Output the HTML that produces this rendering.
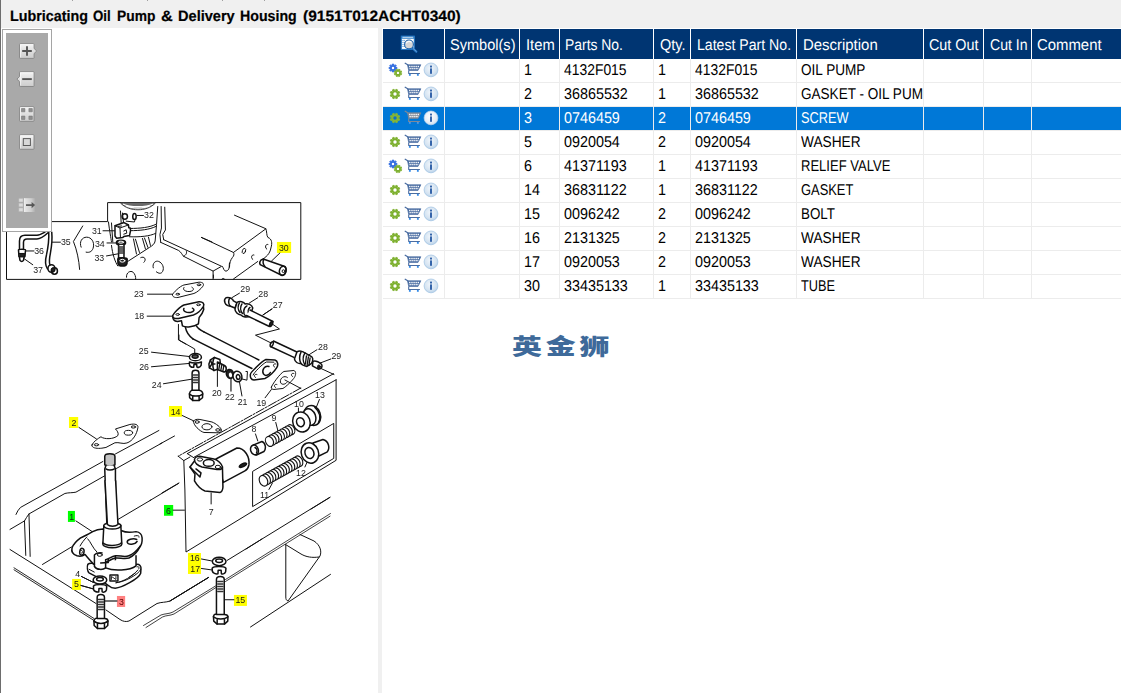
<!DOCTYPE html>
<html lang="en">
<head>
<meta charset="utf-8">
<title>Lubricating Oil Pump &amp; Delivery Housing</title>
<style>
html,body{margin:0;padding:0;}
body{width:1121px;height:693px;overflow:hidden;position:relative;background:#fff;font-family:"Liberation Sans","Noto Sans CJK SC",sans-serif;font-size:15.6px;color:#000;}
.abs,.t,.hdr,.hd,.hl,.vl,.sel,.clip,.ic{position:absolute;}
#topbar{position:absolute;left:0;top:0;width:1121px;height:28px;background:#f0f0f0;}
#title{position:absolute;left:0;top:0;}
.tt{font-weight:bold;font-size:15px;color:#000;-webkit-text-stroke:0.2px #000;}
.tk{position:absolute;top:0;width:1px;height:1px;background:#a0a0a0;}
#leftedge{position:absolute;left:0;top:0;width:1px;height:693px;background:#6d6d6d;}
#split{position:absolute;left:378px;top:28px;width:4px;height:665px;background:#f0f0f0;}
.t{text-rendering:geometricPrecision;white-space:nowrap;line-height:17px;height:17px;transform-origin:0 14px;display:block;}
.t.h{color:#fff;}
.hdr{left:383px;top:29px;width:738px;height:30px;background:#003572;}
.hd{top:29px;width:1px;height:30px;background:#fff;}
.hl{left:383px;width:738px;height:1px;background:#ececec;}
.vl{top:59px;width:1px;height:240px;background:#ececec;}
.sel{left:383px;width:738px;height:23px;background:#0078d7;}
.clip{left:797px;width:126px;height:23px;overflow:hidden;}
#wm{position:absolute;left:511.6px;top:330.8px;font-family:"Liberation Sans","Noto Sans CJK SC","WenQuanYi Zen Hei",sans-serif;font-weight:900;font-size:22px;line-height:32px;letter-spacing:2.85px;color:#3e6a9a;white-space:nowrap;transform-origin:0 0;transform:scaleX(1.36);}
#dia{position:absolute;left:0;top:0;}
</style>
</head>
<body>
<div id="topbar"></div>
<div class="tk" style="left:72px"></div><div class="tk" style="left:147px"></div><div class="tk" style="left:222px"></div><div class="tk" style="left:264px"></div>
<div id="title"><span class="t tt" style="left:9.80px;top:7.80px;transform:scaleX(0.9550)">Lubricating</span> <span class="t tt" style="left:92.60px;top:7.80px;transform:scaleX(0.8839)">Oil</span> <span class="t tt" style="left:116.80px;top:7.80px;transform:scaleX(0.9209)">Pump</span> <span class="t tt" style="left:160.70px;top:7.80px;transform:scaleX(1.0833)">&amp;</span> <span class="t tt" style="left:177.80px;top:7.80px;transform:scaleX(0.9717)">Delivery</span> <span class="t tt" style="left:239.70px;top:7.80px;transform:scaleX(0.9450)">Housing</span> <span class="t tt" style="left:302.50px;top:7.80px;transform:scaleX(1.0338)">(9151T012ACHT0340)</span></div>
<div id="split"></div>
<svg id="dia" width="378" height="693" viewBox="0 0 378 693" font-family="Liberation Sans, sans-serif" font-size="8.8" fill="none" stroke="#111" stroke-width="1" stroke-linecap="round" stroke-linejoin="round">
<style>
#dia path,#dia line,#dia ellipse,#dia circle,#dia rect,#dia polyline,#dia polygon{vector-effect:non-scaling-stroke}
#dia text{stroke:none;fill:#1a1a1a}
#dia{will-change:transform}
#dia .w{fill:#fff}
#dia .k{fill:#222}
#dia .th{stroke-width:1.5}
#dia .tn{stroke-width:0.8}
</style>
<!-- inset frame -->
<path d="M6.5 232V279.4H300.8V202.6H107.6V221.6H52"/>
<!-- tile A: [0,215] x10 -->
<g transform="translate(0,215) scale(0.0999)">
<path class="th" d="M450 172C420 190 395 202 370 203L250 203C215 203 195 225 195 260L195 345"/>
<path class="th" d="M480 178C440 215 400 240 370 240L270 240C245 240 235 250 235 275L235 345"/>
<path class="th" d="M185 350C185 340 255 340 255 350L250 415L240 425L235 455C225 470 210 470 200 455L195 425L190 415Z"/>
<path class="k" d="M192 385H248L245 420H195Z"/>
<path d="M255 360H340"/>
<path d="M245 440L328 498"/>
<path class="th" d="M488 172C492 250 480 330 465 400C452 450 450 500 475 540"/>
<path class="th" d="M518 172C525 250 520 300 505 380C495 430 488 470 500 500"/>
<ellipse class="th" cx="515" cy="535" rx="35" ry="38"/>
<ellipse class="th" cx="545" cy="560" rx="30" ry="32"/>
<ellipse class="k" cx="530" cy="550" rx="18" ry="20"/>
<path d="M525 272H605"/>
<path d="M828 110L735 265C770 350 790 450 797 545"/>
<path d="M812 322C790 270 820 222 868 222C915 222 945 270 935 320C928 360 900 382 862 372"/>
</g>
<text x="34.2" y="254.3">36</text>
<text x="33.2" y="272.6">37</text>
<text x="60.9" y="245.3">35</text>
<text x="91.9" y="234.1">31</text>
<text x="94.9" y="246.9">34</text>
<text x="94.4" y="260.9">33</text>
<!-- tile B: [100,198] x10 -->
<g transform="translate(100,198) scale(0.0999)">
<path fill="#6a6a6a" stroke="none" d="M205 48H555C520 85 460 112 380 112C300 112 240 85 205 48Z"/>
<path stroke="#fff" stroke-width="1.2" d="M235 62C300 95 460 95 525 62M260 80C320 108 440 108 500 80"/><path d="M205 50C250 100 320 118 380 118C440 118 510 100 555 50" stroke-width="0.8"/>
<path d="M578 85L566 265L552 430C548 460 520 480 495 495L270 640"/>
<path d="M300 305C400 305 500 295 562 262M300 327C400 327 500 317 560 284M295 388C400 392 500 382 555 355"/>
<path d="M335 410L365 560M355 412L395 545M425 405L455 510M445 400L480 495M485 392L505 475"/>
<path d="M612 85L615 300L600 365L608 445"/>
<path d="M648 92L655 320L628 365L638 418"/>
<path d="M1015 395L1121 440"/>
<circle class="th" cx="248" cy="185" r="27"/>
<ellipse class="th" cx="345" cy="185" rx="17" ry="31"/>
<path d="M370 175H435"/>
<path d="M262 232L345 240L350 218M205 130L212 250M225 150L235 240"/>
<path class="w th" d="M150 278L240 246L285 270L288 298L302 300L306 325L296 375L238 386L226 396L165 402L150 380Z"/>
<path d="M150 278L200 300L285 270M200 300L205 398M238 330L262 318L268 352L238 362M180 285L215 280"/>
<path d="M30 328H145"/>
<path d="M85 240C95 330 110 400 115 440M115 250L128 440M115 475C125 560 150 640 178 680"/>
<ellipse class="k th" cx="210" cy="448" rx="46" ry="24"/>
<ellipse stroke="#fff" cx="210" cy="442" rx="26" ry="10"/>
<path d="M70 450H165"/>
<path class="w th" d="M186 470V600H240V470"/>
<path d="M186 490H240M186 510H240M186 530H240M186 550H240" stroke-width="1.4" stroke="#333"/>
<path class="k th" d="M178 610C178 595 270 595 272 612L270 655C260 690 190 690 180 655Z"/>
<ellipse stroke="#fff" cx="224" cy="628" rx="25" ry="14"/>
<path d="M65 580L185 558"/>
</g>
<text x="144" y="218.4">32</text>
<g transform="translate(110,250) scale(0.0892)">
<path d="M345 85C385 65 415 105 380 138"/>
<path d="M485 200C470 150 510 115 545 128C590 145 610 200 590 240C575 270 545 265 520 245"/>
<path d="M185 305C180 250 230 225 260 250C280 270 290 300 288 325"/>
</g>
<path d="M163.9 239.8L221.6 266.3L213.1 271.1L183.6 256.3C182 254.5 181 252 178.7 250.5L160.8 242.4M186.3 250.9C187.2 252.800 186.3 255 183.6 256.3M213.1 271.1V279"/>
<!-- tile C: [200,198] x10 -->
<g transform="translate(200,198) scale(0.0999)">
<path d="M345 172L660 308L335 545L15 395"/>
<path d="M660 308C670 330 665 380 680 395C720 410 725 450 710 500C700 560 660 595 615 618"/>
<path d="M335 545C345 560 340 580 325 595C305 620 295 650 295 692"/>
<ellipse cx="440" cy="530" rx="16" ry="27" transform="rotate(20 440 530)"/>
<path d="M680 465C655 455 645 500 668 512M540 570C515 560 505 605 528 615"/>
<rect x="770" y="440" width="142" height="110" fill="#ffff00" stroke="none"/>
<path d="M800 550L715 632"/>
</g>
<text x="278.9" y="251.2">30</text>
<!-- tile D: [200,250] x10 -->
<g transform="translate(200,250) scale(0.0999)">
<path d="M578 115L335 290"/>

<path d="M295 130C290 170 300 200 260 212C240 212 235 180 225 165"/>
<path d="M215 296C220 280 245 280 250 296"/>
<path class="w th" d="M640 93L842 163C870 170 870 250 822 255L612 152C585 140 600 85 640 93Z"/>
<path class="th" d="M640 93C625 110 630 145 650 165"/>
<ellipse class="th" cx="828" cy="208" rx="33" ry="46" transform="rotate(15 828 208)"/>
<circle cx="836" cy="212" r="14"/>
<path d="M395 432L318 478M578 478L495 530M722 590L630 650"/>
<path class="w th" d="M260 478C300 470 330 490 335 510L370 530L350 580L300 560C250 560 230 500 260 478Z"/>
<path class="th" d="M300 480C280 500 285 540 300 560"/>
<path class="w th" d="M370 525C400 505 440 520 450 540C480 530 520 550 528 580L500 660C470 680 430 670 410 650C380 650 350 620 350 590Z"/>
<path class="th" d="M395 530C375 560 380 600 400 625M420 540C400 570 405 610 425 635M470 560C430 580 430 640 455 660M500 575C480 590 478 620 490 640"/>

</g>
<text x="240.3" y="292.1">29</text>
<text x="258.3" y="296.8">28</text>
<text x="272.8" y="308.0">27</text>
<path class="th" d="M192.9 338.9L251.9 368.5M203.9 331.9L258.9 360"/>
<path d="M321 368.5L334 374.5"/>
<!-- tile E: [120,275] x10 -->
<g transform="translate(120,275) scale(0.0999)">
<path d="M935 0V30"/>
<path class="w" d="M525 195C530 180 600 110 640 100L790 72C830 70 845 90 830 112C810 140 770 175 740 185L580 225C545 230 520 215 525 195Z"/>
<path d="M640 125C620 150 660 170 700 165C740 160 745 135 720 122"/>
<ellipse cx="790" cy="98" rx="18" ry="9"/><ellipse cx="578" cy="192" rx="18" ry="9"/>
<path d="M275 192H522M272 412H525"/>
<path class="w th" d="M528 410C525 440 540 462 575 465L615 458L625 510C660 530 740 520 785 490L792 425C810 405 830 375 838 345L835 315Z"/>
<path class="w th" d="M528 410C530 390 600 315 640 300L790 268C830 265 848 290 835 315C815 350 770 390 735 400L585 435C550 440 525 430 528 410Z"/>
<path class="th" d="M640 335C625 360 665 380 705 375C745 370 750 345 725 332"/>
<ellipse cx="785" cy="298" rx="18" ry="9"/><ellipse cx="578" cy="395" rx="18" ry="9"/>
<path class="th" d="M655 525C665 580 690 610 730 640M765 510C780 540 800 550 840 570"/>
<path d="M585 495V650L660 692"/>
</g>
<text x="133.9" y="297.4">23</text>
<text x="134.4" y="319.4">18</text>
<!-- tile F: [120,335] x10 -->
<g transform="translate(120,335) scale(0.0999)">
<path d="M590 0V50L748 140V200"/>

<ellipse class="w th" cx="755" cy="222" rx="60" ry="36" stroke-width="2.2"/>
<ellipse class="th" cx="752" cy="215" rx="30" ry="17" fill="#555" stroke-width="1.8"/>
<path class="w th" d="M695 270C720 285 790 285 815 270L812 305C800 325 780 325 770 320L768 295L740 295L738 322C720 325 700 315 695 300Z"/>
<path d="M315 172L690 215M315 318L690 285M435 488L720 442"/>
<path class="w th" d="M722 570V380C722 345 790 345 790 380V570"/>
<path d="M735 400H780M735 425H780M735 450H780M735 475H780" stroke-width="1.4" stroke="#333"/>
<path class="w th" d="M695 588C700 560 722 552 722 552H790C815 556 828 572 828 588L826 628L792 655H728L697 628Z"/>
<path class="th" d="M695 590C720 618 800 618 828 590M728 612V655M792 612V655"/>
<path class="w th" d="M905 250L945 225L1000 245L1005 290L985 340L940 355L895 330L890 290Z"/>
<path class="th" d="M945 225C925 260 925 310 940 355M905 250L920 290L895 330M920 290L950 290"/>
<path class="w th" d="M975 270L1045 305C1075 320 1065 370 1040 370L975 345Z"/>
<path d="M1000 285L990 340M1020 295L1010 350M1040 305L1030 360" stroke-width="1.3"/>
<path d="M975 345V515"/>
</g>
<text x="138.8" y="354.4">25</text>
<text x="139.2" y="370.4">26</text>
<text x="151.8" y="388">24</text>
<!-- tile G: [225,300] x10 -->
<g transform="translate(225,300) scale(0.0999)">
<path class="w th" d="M250 100L480 215L445 265L215 155Z" stroke="none"/>
<path class="th" d="M250 100L480 215M215 155L445 265"/>
<ellipse class="k th" cx="462" cy="240" rx="13" ry="27" transform="rotate(25 462 240)"/>
<path d="M470 88L380 150"/>
<path d="M480 245L545 290L305 352L460 430"/>
<path class="th" d="M485 410L720 520M455 465L690 575"/>
<ellipse class="th" cx="468" cy="442" rx="13" ry="26" transform="rotate(25 468 442)"/>
<path class="w th" d="M720 520C740 505 780 510 800 530L870 570C885 585 880 620 860 640L820 665C790 660 770 650 760 635C730 640 700 620 695 590Z"/>
<path class="th" d="M760 525C740 560 745 610 760 635M800 530C775 570 780 620 800 650"/>
<path d="M815 560L805 640M835 570L822 655M852 580L840 655" stroke-width="1.3"/>
<path class="w th" d="M880 615C900 600 960 625 970 650C975 675 960 692 935 692L875 660Z"/>
<ellipse class="k" cx="940" cy="668" rx="14" ry="18"/>
<path d="M920 498L830 555M1060 590L950 632"/>
</g>
<text x="318.0" y="349.9">28</text>
<text x="331.4" y="359.3">29</text>
<!-- tile H: [190,350] x10 -->
<g transform="translate(190,350) scale(0.0999)">

<path class="w th" d="M605 245C600 230 720 110 760 95L850 100C880 110 885 150 870 175C850 210 790 270 750 285L640 300C610 300 600 270 605 245Z"/>
<path d="M632 250C640 225 730 135 765 120L840 122"/>
<path class="th" d="M790 165C750 150 715 200 735 240C750 265 790 255 805 225"/>
<path d="M860 140C835 130 825 160 845 170M670 245C645 235 635 265 655 275"/>
<path class="w" d="M815 370C820 350 900 235 940 215L1040 205C1065 215 1060 250 1045 275C1030 300 960 370 930 385L840 395C820 395 812 385 815 370Z"/>
<path d="M975 275C945 250 900 280 905 320C910 350 950 350 970 325"/>
<path d="M1040 235C1015 225 1005 255 1025 265M870 345C845 335 835 365 855 375"/>
<path d="M815 395L752 478"/>
<path d="M950 300L1110 385"/>
<ellipse class="k th" cx="400" cy="240" rx="36" ry="46" transform="rotate(-15 400 240)"/>
<ellipse class="w" cx="405" cy="250" rx="16" ry="24" transform="rotate(-15 405 250)" stroke="none"/>
<ellipse class="w th" cx="475" cy="265" rx="44" ry="54" transform="rotate(-15 475 265)" stroke-width="2"/>
<ellipse class="th" cx="482" cy="270" rx="18" ry="24" transform="rotate(-15 482 270)"/>
<path d="M410 295V410" stroke="#555" stroke-width="1.6"/>
<path d="M495 320L520 460"/>
<path d="M520 290L570 302L575 215L560 215"/>
</g>
<text x="211.9" y="396.2">20</text>
<text x="224.9" y="400.0">22</text>
<text x="237.7" y="405.2">21</text>
<text x="256.4" y="406.0">19</text>
<!-- long lines of relief-valve box (absolute) -->
<path d="M300.8 388L178.2 456.2" stroke-dasharray="9 1.5 2 1.5"/>
<path d="M333.6 373.7L187.3 453.6M336.1 379.8L193.5 457.5"/>
<path d="M336.1 379.8V460.3L186 552L184.9 490L183.8 460.6"/>
<path d="M178.2 456.2L183.8 460.6L190 457M187.3 453.6L193.5 457.5"/>
<path d="M333.4 423.6L252.6 471.4V506.6L333.4 458.6Z"/>
<!-- tile I: [235,380] x10 -->
<g transform="translate(235,380) scale(0.0999)">
<path d="M845 195L815 270M635 280V320M408 425L430 510M205 540L228 610"/>
<ellipse class="w th" cx="775" cy="355" rx="80" ry="102" transform="rotate(-20 775 355)" stroke-width="2"/>
<ellipse class="w th" cx="745" cy="370" rx="62" ry="85" transform="rotate(-20 745 370)"/>
<path class="th" d="M800 275C850 320 860 380 835 430"/>
<ellipse class="w th" cx="665" cy="420" rx="86" ry="102" transform="rotate(-20 665 420)" stroke-width="2.4"/>
<ellipse class="th" cx="655" cy="422" rx="38" ry="46" transform="rotate(-20 655 422)" stroke-width="1.8"/>
<g class="w" stroke-width="1.15">
<ellipse cx="558" cy="497" rx="38" ry="52" transform="rotate(-25 558 497)"/>
<ellipse cx="534" cy="510" rx="38" ry="52" transform="rotate(-25 534 510)"/>
<ellipse cx="507" cy="525" rx="38" ry="52" transform="rotate(-25 507 525)"/>
<ellipse cx="480" cy="540" rx="38" ry="52" transform="rotate(-25 480 540)"/>
<ellipse cx="453" cy="555" rx="38" ry="52" transform="rotate(-25 453 555)"/>
<ellipse cx="426" cy="570" rx="38" ry="52" transform="rotate(-25 426 570)"/>
<ellipse cx="399" cy="585" rx="38" ry="52" transform="rotate(-25 399 585)"/>
<ellipse cx="372" cy="600" rx="38" ry="52" transform="rotate(-25 372 600)"/>
<ellipse cx="345" cy="615" rx="38" ry="52" transform="rotate(-25 345 615)"/>
</g>
</g>
<text x="315.0" y="397.9">13</text>
<text x="294.0" y="407.1">10</text>
<text x="271.6" y="420.7">9</text>
<text x="251.4" y="431.7">8</text>
<!-- tile J: [235,440] x10 -->
<g transform="translate(235,440) scale(0.0999)">
<path d="M950 575L760 692"/>
<path class="w th" d="M780 30L880 -5C940 10 955 85 920 122L830 165Z"/>
<ellipse class="w th" cx="750" cy="130" rx="86" ry="104" transform="rotate(-20 750 130)" stroke-width="2"/>
<ellipse class="th" cx="745" cy="130" rx="44" ry="56" transform="rotate(-20 745 130)"/>
<path d="M700 270L720 225M340 495L375 430"/>
<g class="w" stroke-width="1.15">
<ellipse cx="636" cy="213" rx="40" ry="56" transform="rotate(-25 636 213)"/>
<ellipse cx="609" cy="228" rx="40" ry="56" transform="rotate(-25 609 228)"/>
<ellipse cx="582" cy="243" rx="40" ry="56" transform="rotate(-25 582 243)"/>
<ellipse cx="555" cy="258" rx="40" ry="56" transform="rotate(-25 555 258)"/>
<ellipse cx="528" cy="273" rx="40" ry="56" transform="rotate(-25 528 273)"/>
<ellipse cx="501" cy="288" rx="40" ry="56" transform="rotate(-25 501 288)"/>
<ellipse cx="474" cy="303" rx="40" ry="56" transform="rotate(-25 474 303)"/>
<ellipse cx="447" cy="318" rx="40" ry="56" transform="rotate(-25 447 318)"/>
<ellipse cx="420" cy="333" rx="40" ry="56" transform="rotate(-25 420 333)"/>
<ellipse cx="393" cy="348" rx="40" ry="56" transform="rotate(-25 393 348)"/>
<ellipse cx="366" cy="363" rx="40" ry="56" transform="rotate(-25 366 363)"/>
<ellipse cx="339" cy="378" rx="40" ry="56" transform="rotate(-25 339 378)"/>
<ellipse cx="312" cy="393" rx="40" ry="56" transform="rotate(-25 312 393)"/>
<ellipse cx="285" cy="408" rx="40" ry="56" transform="rotate(-25 285 408)"/>
</g>
<path class="w th" d="M185 50L270 15C310 30 312 90 290 115L215 150Z"/>
<ellipse class="w th" cx="195" cy="100" rx="38" ry="50" transform="rotate(-20 195 100)" stroke-width="2"/>
<path class="th" d="M200 75C220 85 225 110 215 130"/>
</g>
<text x="296.0" y="476.4">12</text>
<text x="260.0" y="497.7">11</text>
<!-- tile K: [160,425] x10 -->
<g transform="translate(160,425) scale(0.0999)">
<path d="M0 190L145 110M20 680L190 580"/>
<path class="w th" d="M560 340L770 230C850 230 900 320 890 400C885 430 870 450 850 460L635 575Z"/>
<path class="k" d="M795 420C790 400 850 370 865 385C872 400 812 435 795 420Z" stroke-width="1.6"/>
<path class="w th" d="M345 360L300 420L350 490L345 560C380 620 420 650 450 660L600 675C620 670 628 650 630 620L625 420Z"/>
<path class="w th" d="M345 345C350 320 380 310 410 315L540 340C580 350 620 390 625 420C620 440 600 450 570 445L420 420C380 410 345 380 345 345Z"/>
<ellipse cx="400" cy="345" rx="27" ry="17"/>
<ellipse class="th" cx="488" cy="380" rx="54" ry="34"/>
<ellipse cx="580" cy="420" rx="27" ry="17"/>
<path class="th" d="M300 420L400 520L410 480L360 440"/>
</g>
<!-- tile L: [150,480] x10 -->
<g transform="translate(150,480) scale(0.0999)">
<rect x="140" y="250" width="92" height="108" fill="#00ff00" stroke="none"/>
<path d="M232 302H345M612 130V240M0 205L285 35M960 692L1121 590"/>
</g>
<text x="165.9" y="513.7">6</text>
<text x="208.7" y="514.9">7</text>
<!-- tile M: [160,395] x10 -->
<g transform="translate(160,395) scale(0.0999)">
<rect x="90" y="110" width="130" height="108" fill="#ffff00" stroke="none"/>
<path d="M222 205L335 258"/>
<path class="w" d="M335 262C345 245 370 240 400 245L520 270C560 285 610 325 615 350C615 370 600 380 570 378L440 375C400 365 330 300 335 262Z"/>
<ellipse cx="372" cy="270" rx="20" ry="13"/>
<ellipse cx="470" cy="318" rx="50" ry="31"/>
<ellipse cx="580" cy="350" rx="22" ry="13"/>
</g>
<text x="170.7" y="414.9">14</text>
<!-- sump long lines (absolute) -->
<path d="M330 497.2L227 560.5"/>
<path d="M208.5 577.5L170 601C166 602.5 161 602 157 603.5L129 621C126 622 123 621.5 120 619.5L106 610"/>
<path d="M330.5 513.5L225.5 579.5M330 516.2L225.5 581.5M215.5 586L173 612C169 614 165 613.5 161 615L143.5 625.5M216 587.5L174 614C170 615.8 166 615.2 162.500 617L146 627.500" stroke-width="0.8"/>
<path d="M10 549.5L96 603.500"/>
<path d="M14 567.8L94 618.5M14 569.8L94 620.5" stroke-width="0.9"/>
<path d="M330.5 574.4L250.5 627"/>
<path d="M285.8 545V597C285.8 599.500 286.500 600.5 288 601L320 556C322 551 320 545 314 541L300 534.5M285.5 544.5L301 554C306 557 312 558 319 557"/>
<path d="M208.500 577.500L170 601"/>
<!-- tile N: [50,405] x10 -->
<g transform="translate(50,405) scale(0.0999)">
<rect x="190" y="120" width="92" height="110" fill="#ffff00" stroke="none"/>
<path d="M290 225L465 340"/>
<path d="M1090 255L655 490M1121 380L665 635"/>
<path class="w" d="M420 400C430 370 480 335 510 318C540 345 640 345 680 305C690 280 670 255 655 240L800 195C850 185 885 195 880 225C870 290 830 360 770 380C730 395 690 370 650 378L560 425C500 440 410 440 420 400Z"/>
<ellipse cx="465" cy="398" rx="22" ry="11"/><ellipse cx="785" cy="278" rx="42" ry="24"/><ellipse cx="835" cy="220" rx="22" ry="11"/>
<path class="th" fill="#c4c4c4" d="M548 600V515C548 480 650 480 650 515V600C620 615 580 615 548 600Z"/>
<path class="w th" d="M560 605L548 640L585 1600H655L655 640L642 605"/>
<path class="th" d="M560 640C580 655 620 655 645 640"/>
</g>
<text x="71.6" y="425.8">2</text>
<!-- tile O: [0,460] x10 -->
<g transform="translate(0,460) scale(0.0999)">
<path d="M1030 15L205 475C185 495 170 520 160 545"/>
<path d="M1045 160L760 322C720 330 690 325 650 335L290 540C270 560 260 590 245 610L100 695"/>
<path d="M245 610L258 955M290 540L302 965"/>
<rect x="680" y="510" width="70" height="110" fill="#00ff00" stroke="none"/>
<path d="M760 610L925 718"/>
</g>
<text x="69.2" y="519.8">1</text>
<!-- tile P: [0,520] x10 -->
<g transform="translate(0,520) scale(0.0999)">
<path d="M715 270L425 445"/>
<rect x="722" y="590" width="88" height="110" fill="#ffff00" stroke="none"/>
<path d="M815 565L935 625M810 655L935 690"/>
</g>
<text x="75.2" y="576.5">4</text>
<text x="74" y="587.0">5</text>
<!-- pump body: lower part, tile W [70,545] x12.38 -->
<g transform="translate(70,545) scale(0.08078)">
<path class="w th" d="M220 240C240 222 290 222 305 240L820 240C860 235 885 260 878 300L875 350C850 420 640 530 560 535C520 535 495 520 480 505L330 395L235 345C215 320 210 270 220 240Z"/>
<path d="M235 300L300 335M878 300C850 370 650 470 570 465M730 400L810 345M830 270C850 262 865 280 850 295"/>
</g>
<!-- pump body: upper part, [60,520] x11.18 -->
<g transform="translate(60,520) scale(0.089445)">
<path d="M1017 -224L648 -6"/>
<path class="w" stroke="none" d="M510 470L510 535C600 575 780 565 850 512L850 410Z"/><path class="th" d="M510 535C600 575 780 565 850 512L850 400"/>
<path class="w th" d="M365 130C320 160 260 185 230 200C190 230 150 270 135 310C125 350 140 385 190 400C230 410 260 400 280 385C310 420 345 465 385 500L385 520C410 560 480 560 510 535L510 445C550 430 580 405 620 400C670 395 720 420 770 400C820 380 860 340 890 300C915 280 920 240 918 200C915 160 890 135 850 130C790 140 730 140 690 120L480 100C440 100 400 110 365 130Z"/>
<path class="th" d="M520 470C550 455 580 435 620 425C670 420 720 440 770 425C830 400 870 350 900 290"/>
<path class="th" d="M385 500L385 390C400 372 430 364 470 368M455 480L540 475"/>
<ellipse cx="445" cy="390" rx="28" ry="16"/>
<path d="M310 210C340 240 370 320 410 355M300 190C270 220 240 260 225 290"/>
<ellipse class="th" cx="245" cy="355" rx="24" ry="38" transform="rotate(10 245 355)"/>
<path d="M235 340C260 338 262 368 240 370"/>
<path class="th" d="M858 218C815 200 745 220 752 250C760 280 840 278 862 240"/>
<path d="M830 180C855 168 895 175 885 192"/>
<ellipse class="w th" cx="585" cy="265" rx="108" ry="46" stroke-width="2"/>
<path class="w th" d="M490 65L480 255C515 295 655 295 690 250L680 60Z"/>
<ellipse class="w th" cx="585" cy="65" rx="96" ry="36"/>
<path class="w th" d="M503 -440L530 50C555 75 620 75 648 50L622 -440" stroke-width="1.8"/>
</g>
<!-- tile R: [60,560] x10 -->
<g transform="translate(60,560) scale(0.0999)">
<path class="w" d="M500 150H580V210H500Z" stroke-width="1.4"/>
<path d="M515 195V165L560 195V165" stroke-width="0.9"/>
<path d="M560 230C640 210 720 170 780 100"/>
<ellipse class="w th" cx="400" cy="200" rx="68" ry="40" stroke-width="2.4"/>
<ellipse class="th" cx="400" cy="192" rx="34" ry="17" stroke-width="1.8"/>
<path class="w th" d="M335 262C350 240 450 240 468 262L465 300C455 325 430 325 422 318L420 285L390 285L388 320C365 325 340 312 336 295Z" stroke-width="2"/>
<path d="M215 165L335 225M210 255L335 290"/>
<rect x="570" y="360" width="82" height="110" fill="#ff8080" stroke="none"/>
<path d="M450 410H570" stroke="#444" stroke-width="1.4"/>
<path class="w th" d="M372 600V375C372 335 445 335 445 375V600"/>
<path d="M385 395H435M385 420H435M385 445H435M385 470H435M385 495H435" stroke-width="1.4" stroke="#333"/>
<path class="w th" d="M340 610C345 580 372 580 372 585H445C470 585 480 600 480 612L478 655L445 685H375L342 655Z"/>
<path class="th" d="M340 612C370 642 450 642 480 612M375 636V685M445 636V685"/>
</g>
<text x="119.1" y="604.8" style="fill:#5a0000">3</text>
<!-- tile S: [170,540] x10 -->
<g transform="translate(170,540) scale(0.0999)">
<rect x="180" y="130" width="130" height="210" fill="#ffff00" stroke="none"/>
<path d="M315 190L420 210M315 285L420 300"/>
<path d="M385 375L0 610"/>
<ellipse class="w th" cx="492" cy="215" rx="68" ry="42" stroke-width="2.4"/>
<ellipse class="th" cx="492" cy="208" rx="34" ry="17" stroke-width="1.8"/>
<path class="w th" d="M422 282C440 260 540 260 560 282L557 318C547 343 522 343 514 336L512 303L482 303L480 338C457 343 428 330 424 313Z" stroke-width="2"/>
<rect x="640" y="550" width="130" height="110" fill="#ffff00" stroke="none"/>
<path d="M545 598H640"/>
<path class="w th" d="M465 760V395C465 355 543 355 543 395V760"/>
<path d="M478 415H530M478 440H530M478 465H530M478 490H530M478 515H530" stroke-width="1.4" stroke="#333"/>
<path class="w th" d="M435 765C440 740 465 740 465 745H543C570 745 580 760 580 770L578 812L545 842H472L438 812Z"/>
<path class="th" d="M435 768C465 797 550 797 580 768M472 792V842M545 792V842"/>
</g>
<text x="189.9" y="561.2">16</text>
<text x="190.3" y="571.6">17</text>
<text x="235.4" y="603.4">15</text>
</svg>

<div class="abs" style="left:2px;top:29px;width:48px;height:201px;border:1px solid #a5a5a5;background:#fff;"></div>
<div class="abs" style="left:6px;top:33px;width:42px;height:195px;background:#a9a9a9;"></div>
<svg class="abs" style="left:6px;top:33px" width="42" height="195" viewBox="6 33 42 195">
<defs>
<linearGradient id="bg1" x1="0" y1="0" x2="0" y2="1"><stop offset="0" stop-color="#f4f4f4"/><stop offset="0.5" stop-color="#dedede"/><stop offset="1" stop-color="#cdcdcd"/></linearGradient>
<linearGradient id="bg2" x1="0" y1="0" x2="1" y2="0"><stop offset="0" stop-color="#e8e8e8"/><stop offset="0.6" stop-color="#cfcfcf"/><stop offset="1" stop-color="#a9a9a9"/></linearGradient>
</defs>
<!-- zoom in -->
<path d="M20.200 43.600h13.200q0.700 0 0.700 0.700v4.200l2.600 2.500l-2.600 2.500v4.200q0 0.700-0.700 0.700h-13.200q-0.700 0-0.700-0.700v-13.400q0-0.700 0.700-0.700z" fill="url(#bg1)" stroke="#858585" stroke-width="0.9"/>
<path d="M20.600 57.300v-12.600h12.400" fill="none" stroke="#fff" stroke-width="0.7" opacity="0.9"/>
<path d="M22.200 51h9.600M27 46.200v9.600" stroke="#555" stroke-width="1.900" fill="none"/>
<!-- zoom out -->
<path d="M20.200 71.700h13.200q0.700 0 0.700 0.700v13.400q0 0.700-0.700 0.700h-13.200q-0.700 0-0.700-0.700v-4.200l-2.600-2.500l2.600-2.500v-4.200q0-0.700 0.700-0.700z" fill="url(#bg1)" stroke="#858585" stroke-width="0.9"/>
<path d="M20.600 85.400v-12.600h12.400" fill="none" stroke="#fff" stroke-width="0.7" opacity="0.9"/>
<path d="M22.200 79.100h9.600" stroke="#555" stroke-width="1.900" fill="none"/>
<!-- grid -->
<rect x="19.600" y="106.700" width="14.400" height="14.600" rx="0.700" fill="url(#bg1)" stroke="#858585" stroke-width="0.9"/>
<path d="M20.600 120.400v-12.600h12.400" fill="none" stroke="#fff" stroke-width="0.7" opacity="0.9"/>
<path d="M21.500 108.500h3.400v3.300h-3.400zM28.900 108.500h3.400v3.300h-3.400zM21.500 116.100h3.400v3.300h-3.400zM28.900 116.100h3.400v3.300h-3.400z" fill="#909090" stroke="#777" stroke-width="0.6"/>
<!-- fit -->
<rect x="19.600" y="134.700" width="14.400" height="14.600" rx="0.700" fill="url(#bg1)" stroke="#858585" stroke-width="0.9"/>
<path d="M20.600 148.400v-12.600h12.400" fill="none" stroke="#fff" stroke-width="0.7" opacity="0.9"/>
<rect x="23.300" y="138.600" width="7.100" height="6.900" fill="#d8d8d8" stroke="#5a5a5a" stroke-width="1"/>
<!-- list arrow -->
<rect x="24.200" y="198.200" width="11.400" height="13.800" fill="url(#bg2)"/>
<path d="M24.400 198.200v13.800" stroke="#f4f4f4" stroke-width="0.8"/>
<path d="M18.900 198.400h4.100v3.500h-4.100zM18.900 203.200h4.100v3.500h-4.100zM18.900 208h4.100v3.500h-4.100z" fill="#dcdcdc" stroke="#b8b8b8" stroke-width="0.5"/>
<path d="M26 205.100h6.400" stroke="#555" stroke-width="1.700" fill="none"/>
<path d="M31.600 201.900l3.500 3.200l-3.500 3.200z" fill="#555"/>
</svg>

<div id="leftedge"></div>
<svg width="0" height="0" style="position:absolute">
<defs>
<radialGradient id="ig" cx="0.45" cy="0.4" r="0.7"><stop offset="0" stop-color="#f1f6fb"/><stop offset="0.6" stop-color="#d4e3f1"/><stop offset="1" stop-color="#a9c8e4"/></radialGradient>
<radialGradient id="igs" cx="0.45" cy="0.4" r="0.7"><stop offset="0" stop-color="#ffffff"/><stop offset="0.6" stop-color="#e6eef7"/><stop offset="1" stop-color="#c3d8ec"/></radialGradient>
<g id="gear1"><path d="M16.81 11.96L16.07 13.72L14.86 13.18L14.18 13.86L14.72 15.07L12.96 15.81L12.48 14.57L11.52 14.57L11.04 15.81L9.28 15.07L9.82 13.86L9.14 13.18L7.93 13.72L7.19 11.96L8.43 11.48L8.43 10.52L7.19 10.04L7.93 8.28L9.14 8.82L9.82 8.14L9.28 6.93L11.04 6.19L11.52 7.43L12.48 7.43L12.96 6.19L14.72 6.93L14.18 8.14L14.86 8.82L16.07 8.28L16.81 10.04L15.57 10.52L15.57 11.48Z" fill="#7db02e" stroke="#7db02e" stroke-width="0.8" stroke-linejoin="round"/><circle cx="12" cy="11" r="1.7" fill="#fff"/></g>
<g id="gear1s"><path d="M16.81 11.96L16.07 13.72L14.86 13.18L14.18 13.86L14.72 15.07L12.96 15.81L12.48 14.57L11.52 14.57L11.04 15.81L9.28 15.07L9.82 13.86L9.14 13.18L7.93 13.72L7.19 11.96L8.43 11.48L8.43 10.52L7.19 10.04L7.93 8.28L9.14 8.82L9.82 8.14L9.28 6.93L11.04 6.19L11.52 7.43L12.48 7.43L12.96 6.19L14.72 6.93L14.18 8.14L14.86 8.82L16.07 8.28L16.81 10.04L15.57 10.52L15.57 11.48Z" fill="#86b535" stroke="#86b535" stroke-width="0.8" stroke-linejoin="round"/><circle cx="12" cy="11" r="1.7" fill="#0a6fd0"/></g>
<g id="gear2"><path d="M9.22 5.08L10.78 5.08L10.74 6.20L11.46 6.49L12.22 5.67L13.33 6.78L12.51 7.54L12.80 8.26L13.92 8.22L13.92 9.78L12.80 9.74L12.51 10.46L13.33 11.22L12.22 12.33L11.46 11.51L10.74 11.80L10.78 12.92L9.22 12.92L9.26 11.80L8.54 11.51L7.78 12.33L6.67 11.22L7.49 10.46L7.20 9.74L6.08 9.78L6.08 8.22L7.20 8.26L7.49 7.54L6.67 6.78L7.78 5.67L8.54 6.49L9.26 6.20Z" fill="#2f6be0" stroke="#2f6be0" stroke-width="0.8" stroke-linejoin="round"/><circle cx="10" cy="9" r="1.25" fill="#fff"/><path d="M18.73 14.64L18.16 16.01L17.23 15.60L16.70 16.13L17.11 17.06L15.74 17.63L15.37 16.68L14.63 16.68L14.26 17.63L12.89 17.06L13.30 16.13L12.77 15.60L11.84 16.01L11.27 14.64L12.22 14.27L12.22 13.53L11.27 13.16L11.84 11.79L12.77 12.20L13.30 11.67L12.89 10.74L14.26 10.17L14.63 11.12L15.37 11.12L15.74 10.17L17.11 10.74L16.70 11.67L17.23 12.20L18.16 11.79L18.73 13.16L17.78 13.53L17.78 14.27Z" fill="#7db02e" stroke="#7db02e" stroke-width="0.8" stroke-linejoin="round"/><circle cx="15" cy="13.9" r="1.2" fill="#fff"/></g>
<g id="cart"><path d="M22.200 4.300L24.700 5.700" fill="none" stroke="#4a6da2" stroke-width="1.300" stroke-linecap="round"/>
<path d="M24.500 5.800H37.900L35 11.400H25.700Z" fill="#4a6da2" stroke="#4a6da2" stroke-width="0.700" stroke-linejoin="round"/>
<rect x="26.10" y="6.800" width="1.350" height="1.400" fill="#fff"/><rect x="28.30" y="6.800" width="1.350" height="1.400" fill="#fff"/><rect x="30.40" y="6.800" width="1.350" height="1.400" fill="#fff"/><rect x="32.50" y="6.800" width="1.350" height="1.400" fill="#fff"/><rect x="34.60" y="6.800" width="1.350" height="1.400" fill="#fff"/><rect x="26.50" y="8.900" width="1.300" height="1.400" fill="#fff"/><rect x="28.50" y="8.900" width="1.300" height="1.400" fill="#fff"/><rect x="30.50" y="8.900" width="1.300" height="1.400" fill="#fff"/><rect x="32.50" y="8.900" width="1.300" height="1.400" fill="#fff"/><rect x="34.350" y="8.900" width="0.900" height="1.400" fill="#fff"/>
<path d="M25.700 11.400V14.500H36.900" fill="none" stroke="#4a6da2" stroke-width="1.100" stroke-linejoin="round"/>
<rect x="25.900" y="15.100" width="1.900" height="1.700" rx="0.500" fill="#2b86e6"/><rect x="33.900" y="15.100" width="1.900" height="1.700" rx="0.500" fill="#2b86e6"/></g>
<g id="carts"><path d="M22.200 4.300L24.700 5.700" fill="none" stroke="#7f8896" stroke-width="1.300" stroke-linecap="round"/>
<path d="M24.500 5.800H37.900L35 11.400H25.700Z" fill="#7f8896" stroke="#7f8896" stroke-width="0.700" stroke-linejoin="round"/>
<rect x="26.10" y="6.800" width="1.350" height="1.400" fill="#fff"/><rect x="28.30" y="6.800" width="1.350" height="1.400" fill="#fff"/><rect x="30.40" y="6.800" width="1.350" height="1.400" fill="#fff"/><rect x="32.50" y="6.800" width="1.350" height="1.400" fill="#fff"/><rect x="34.60" y="6.800" width="1.350" height="1.400" fill="#fff"/><rect x="26.50" y="8.900" width="1.300" height="1.400" fill="#fff"/><rect x="28.50" y="8.900" width="1.300" height="1.400" fill="#fff"/><rect x="30.50" y="8.900" width="1.300" height="1.400" fill="#fff"/><rect x="32.50" y="8.900" width="1.300" height="1.400" fill="#fff"/><rect x="34.350" y="8.900" width="0.900" height="1.400" fill="#fff"/>
<path d="M25.700 11.400V14.500H36.900" fill="none" stroke="#7f8896" stroke-width="1.100" stroke-linejoin="round"/>
<rect x="25.900" y="15.100" width="1.900" height="1.700" rx="0.500" fill="#5a9ae0"/><rect x="33.900" y="15.100" width="1.900" height="1.700" rx="0.500" fill="#5a9ae0"/></g>
<g id="info"><circle cx="48" cy="10.900" r="6.900" fill="url(#ig)" stroke="#9fc2e2" stroke-width="0.700"/>
<rect x="47.050" y="6.600" width="1.900" height="1.900" fill="#2d5ea6"/>
<rect x="47.050" y="9.400" width="1.900" height="5.400" fill="#2d5ea6"/></g>
<g id="infos"><circle cx="48" cy="10.900" r="6.900" fill="url(#igs)" stroke="#c5d9ee" stroke-width="0.700"/>
<rect x="47.050" y="6.600" width="1.900" height="1.900" fill="#2d5ea6"/>
<rect x="47.050" y="9.400" width="1.900" height="5.400" fill="#2d5ea6"/></g>
<g id="hicon">
<rect x="18.300" y="7.100" width="13" height="13.300" fill="#fff" stroke="#1f74c4" stroke-width="1"/>
<rect x="18.300" y="7.100" width="13" height="2.600" fill="#1f74c4"/>
<path d="M19.400 8.300H30.300" stroke="#fff" stroke-width="0.800"/>
<path d="M19.400 11.400H22M19.400 13.400H22M19.400 15.400H22M19.400 17.400H22" stroke="#1f74c4" stroke-width="0.800" stroke-dasharray="1.200 0.600"/>
<path d="M29 18.700L33.300 22.700" stroke="#1f6fbf" stroke-width="2.300" stroke-linecap="round"/>
<path d="M30.100 19.500L33.300 22.500" stroke="#9cc4ea" stroke-width="0.700" stroke-linecap="round"/>
<circle cx="26" cy="15.400" r="4.400" fill="#d6d6d6" stroke="#1c63ad" stroke-width="1.100"/>
<path d="M23.200 14.300A3.100 3.100 0 0 1 28.500 13.500" stroke="#fff" stroke-width="1.100" fill="none" opacity="0.950"/>
</g>
</defs>
</svg>

<div class="hdr"></div>
<svg class="ic" style="left:383px;top:29px" width="61" height="30" viewBox="0 0 61 30"><use href="#hicon"/></svg>
<div class="hd" style="left:444px"></div>
<div class="hd" style="left:519px"></div>
<div class="hd" style="left:559px"></div>
<div class="hd" style="left:653px"></div>
<div class="hd" style="left:690px"></div>
<div class="hd" style="left:796px"></div>
<div class="hd" style="left:923px"></div>
<div class="hd" style="left:983px"></div>
<div class="hd" style="left:1031px"></div>
<span class="t h" style="left:450.40px;top:36.70px;transform:scale(0.9330,1);">Symbol(s)</span>
<span class="t h" style="left:525.70px;top:36.70px;transform:scale(0.9459,1);">Item</span>
<span class="t h" style="left:565.30px;top:36.70px;transform:scale(0.8916,1);">Parts No.</span>
<span class="t h" style="left:659.60px;top:36.70px;transform:scale(0.9288,1);">Qty.</span>
<span class="t h" style="left:696.90px;top:36.70px;transform:scale(0.9044,1);">Latest Part No.</span>
<span class="t h" style="left:802.90px;top:36.70px;transform:scale(0.9577,1);">Description</span>
<span class="t h" style="left:929.30px;top:36.70px;transform:scale(0.9211,1);">Cut Out</span>
<span class="t h" style="left:989.60px;top:36.70px;transform:scale(0.9027,1);">Cut In</span>
<span class="t h" style="left:1037.40px;top:36.70px;transform:scale(0.9553,1);">Comment</span>
<div class="hl" style="top:82px"></div>
<span class="t" style="left:523.90px;top:61.70px;transform:scale(0.9200,1);">1</span>
<span class="t" style="left:563.80px;top:61.70px;transform:scale(0.8907,1);">4132F015</span>
<span class="t" style="left:657.90px;top:61.70px;transform:scale(0.9200,1);">1</span>
<span class="t" style="left:694.80px;top:61.70px;transform:scale(0.8907,1);">4132F015</span>
<div class="clip" style="top:59px"><span class="t" style="left:4.40px;top:2.70px;transform:scale(0.8709,1);">OIL PUMP</span></div>
<svg class="ic" style="left:383px;top:59px" width="61" height="23" viewBox="0 0 61 23"><use href="#gear2"/><use href="#cart"/><use href="#info"/></svg>
<div class="hl" style="top:106px"></div>
<span class="t" style="left:523.90px;top:85.70px;transform:scale(0.9200,1);">2</span>
<span class="t" style="left:563.80px;top:85.70px;transform:scale(0.9200,1);">36865532</span>
<span class="t" style="left:657.90px;top:85.70px;transform:scale(0.9200,1);">1</span>
<span class="t" style="left:694.80px;top:85.70px;transform:scale(0.9200,1);">36865532</span>
<div class="clip" style="top:83px"><span class="t" style="left:4.40px;top:2.70px;transform:scale(0.8689,1);">GASKET - OIL PUM</span></div>
<svg class="ic" style="left:383px;top:83px" width="61" height="23" viewBox="0 0 61 23"><use href="#gear1"/><use href="#cart"/><use href="#info"/></svg>
<div class="sel" style="top:107px"></div>
<div class="hl" style="top:130px"></div>
<span class="t" style="left:523.90px;top:109.70px;transform:scale(0.9200,1);color:#fff;">3</span>
<span class="t" style="left:563.80px;top:109.70px;transform:scale(0.9200,1);color:#fff;">0746459</span>
<span class="t" style="left:657.90px;top:109.70px;transform:scale(0.9200,1);color:#fff;">2</span>
<span class="t" style="left:694.80px;top:109.70px;transform:scale(0.9200,1);color:#fff;">0746459</span>
<div class="clip" style="top:107px"><span class="t" style="left:4.40px;top:2.70px;transform:scale(0.8174,1);color:#fff;">SCREW</span></div>
<svg class="ic" style="left:383px;top:107px" width="61" height="23" viewBox="0 0 61 23"><use href="#gear1s"/><use href="#carts"/><use href="#infos"/></svg>
<div class="hl" style="top:154px"></div>
<span class="t" style="left:523.90px;top:133.70px;transform:scale(0.9200,1);">5</span>
<span class="t" style="left:563.80px;top:133.70px;transform:scale(0.9200,1);">0920054</span>
<span class="t" style="left:657.90px;top:133.70px;transform:scale(0.9200,1);">2</span>
<span class="t" style="left:694.80px;top:133.70px;transform:scale(0.9200,1);">0920054</span>
<div class="clip" style="top:131px"><span class="t" style="left:4.40px;top:2.70px;transform:scale(0.8783,1);">WASHER</span></div>
<svg class="ic" style="left:383px;top:131px" width="61" height="23" viewBox="0 0 61 23"><use href="#gear1"/><use href="#cart"/><use href="#info"/></svg>
<div class="hl" style="top:178px"></div>
<span class="t" style="left:523.90px;top:157.70px;transform:scale(0.9200,1);">6</span>
<span class="t" style="left:563.80px;top:157.70px;transform:scale(0.9200,1);">41371193</span>
<span class="t" style="left:657.90px;top:157.70px;transform:scale(0.9200,1);">1</span>
<span class="t" style="left:694.80px;top:157.70px;transform:scale(0.9200,1);">41371193</span>
<div class="clip" style="top:155px"><span class="t" style="left:4.40px;top:2.70px;transform:scale(0.8360,1);">RELIEF VALVE</span></div>
<svg class="ic" style="left:383px;top:155px" width="61" height="23" viewBox="0 0 61 23"><use href="#gear2"/><use href="#cart"/><use href="#info"/></svg>
<div class="hl" style="top:202px"></div>
<span class="t" style="left:523.90px;top:181.70px;transform:scale(0.9200,1);">14</span>
<span class="t" style="left:563.80px;top:181.70px;transform:scale(0.9200,1);">36831122</span>
<span class="t" style="left:657.90px;top:181.70px;transform:scale(0.9200,1);">1</span>
<span class="t" style="left:694.80px;top:181.70px;transform:scale(0.9200,1);">36831122</span>
<div class="clip" style="top:179px"><span class="t" style="left:4.40px;top:2.70px;transform:scale(0.8268,1);">GASKET</span></div>
<svg class="ic" style="left:383px;top:179px" width="61" height="23" viewBox="0 0 61 23"><use href="#gear1"/><use href="#cart"/><use href="#info"/></svg>
<div class="hl" style="top:226px"></div>
<span class="t" style="left:523.90px;top:205.70px;transform:scale(0.9200,1);">15</span>
<span class="t" style="left:563.80px;top:205.70px;transform:scale(0.9200,1);">0096242</span>
<span class="t" style="left:657.90px;top:205.70px;transform:scale(0.9200,1);">2</span>
<span class="t" style="left:694.80px;top:205.70px;transform:scale(0.9200,1);">0096242</span>
<div class="clip" style="top:203px"><span class="t" style="left:4.40px;top:2.70px;transform:scale(0.8581,1);">BOLT</span></div>
<svg class="ic" style="left:383px;top:203px" width="61" height="23" viewBox="0 0 61 23"><use href="#gear1"/><use href="#cart"/><use href="#info"/></svg>
<div class="hl" style="top:250px"></div>
<span class="t" style="left:523.90px;top:229.70px;transform:scale(0.9200,1);">16</span>
<span class="t" style="left:563.80px;top:229.70px;transform:scale(0.9200,1);">2131325</span>
<span class="t" style="left:657.90px;top:229.70px;transform:scale(0.9200,1);">2</span>
<span class="t" style="left:694.80px;top:229.70px;transform:scale(0.9200,1);">2131325</span>
<div class="clip" style="top:227px"><span class="t" style="left:4.40px;top:2.70px;transform:scale(0.8783,1);">WASHER</span></div>
<svg class="ic" style="left:383px;top:227px" width="61" height="23" viewBox="0 0 61 23"><use href="#gear1"/><use href="#cart"/><use href="#info"/></svg>
<div class="hl" style="top:274px"></div>
<span class="t" style="left:523.90px;top:253.70px;transform:scale(0.9200,1);">17</span>
<span class="t" style="left:563.80px;top:253.70px;transform:scale(0.9200,1);">0920053</span>
<span class="t" style="left:657.90px;top:253.70px;transform:scale(0.9200,1);">2</span>
<span class="t" style="left:694.80px;top:253.70px;transform:scale(0.9200,1);">0920053</span>
<div class="clip" style="top:251px"><span class="t" style="left:4.40px;top:2.70px;transform:scale(0.8783,1);">WASHER</span></div>
<svg class="ic" style="left:383px;top:251px" width="61" height="23" viewBox="0 0 61 23"><use href="#gear1"/><use href="#cart"/><use href="#info"/></svg>
<div class="hl" style="top:298px"></div>
<span class="t" style="left:523.90px;top:277.70px;transform:scale(0.9200,1);">30</span>
<span class="t" style="left:563.80px;top:277.70px;transform:scale(0.9200,1);">33435133</span>
<span class="t" style="left:657.90px;top:277.70px;transform:scale(0.9200,1);">1</span>
<span class="t" style="left:694.80px;top:277.70px;transform:scale(0.9200,1);">33435133</span>
<div class="clip" style="top:275px"><span class="t" style="left:4.40px;top:2.70px;transform:scale(0.8178,1);">TUBE</span></div>
<svg class="ic" style="left:383px;top:275px" width="61" height="23" viewBox="0 0 61 23"><use href="#gear1"/><use href="#cart"/><use href="#info"/></svg>
<div class="vl" style="left:444px"></div>
<div class="vl" style="left:519px"></div>
<div class="vl" style="left:559px"></div>
<div class="vl" style="left:653px"></div>
<div class="vl" style="left:690px"></div>
<div class="vl" style="left:796px"></div>
<div class="vl" style="left:923px"></div>
<div class="vl" style="left:983px"></div>
<div class="vl" style="left:1031px"></div>
<div id="wm">英金狮</div>
</body>
</html>
